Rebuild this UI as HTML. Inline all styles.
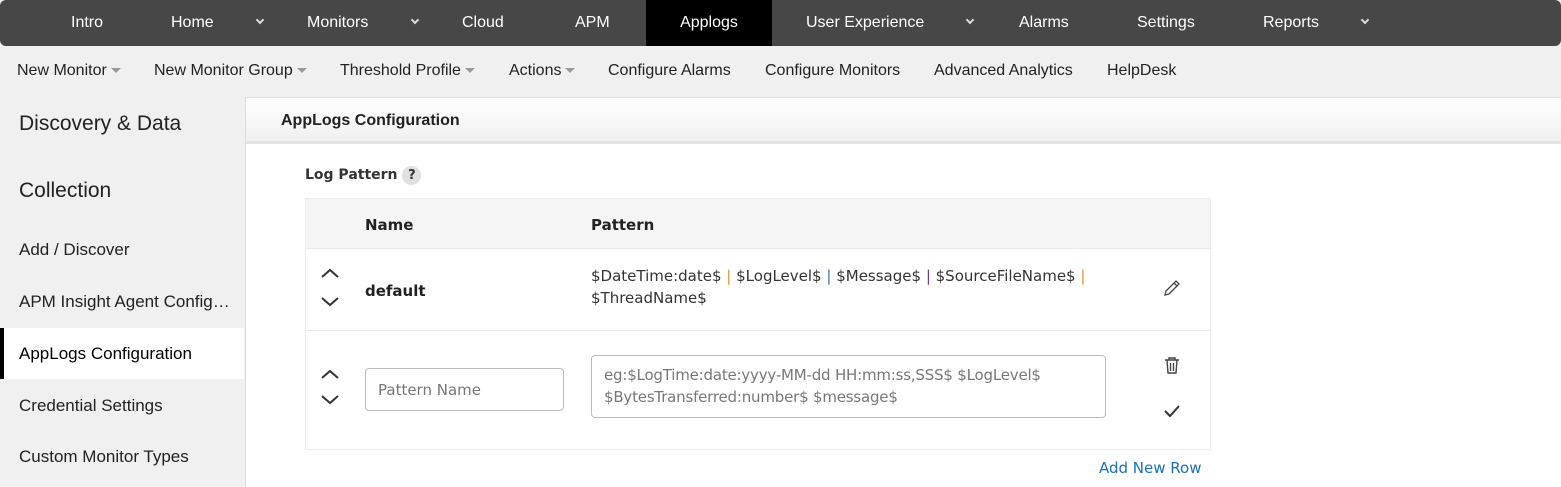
<!DOCTYPE html><html><head><style>
*{margin:0;padding:0;box-sizing:border-box}
body{width:1561px;height:487px;overflow:hidden;font-family:"Liberation Sans",Arial,sans-serif;background:#f0f0f0;position:relative;color:#222}
.top{position:absolute;left:0;top:0;width:1561px;height:46px;background:#474747;border-radius:6px}
.top span{position:absolute;top:1px;line-height:44px;color:#fff;font-size:16px}
.top .act{background:#000;height:46px;width:126px;left:646px;text-align:center;top:0;line-height:45px}
.chev{position:absolute;top:17px;border-right:2px solid #ddd;border-bottom:2px solid #ddd;transform:rotate(45deg);width:6px;height:6px}
.sub{position:absolute;top:47px;left:0;width:1561px;height:50px}
.sub span{position:absolute;top:0;line-height:48px;font-size:16px;color:#222}
.tri{display:inline-block;width:0;height:0;border-left:5px solid transparent;border-right:5px solid transparent;border-top:5px solid #999;vertical-align:middle;margin-left:4px}
.side span{position:absolute;left:19px;font-size:17px;color:#222}
.main{position:absolute;left:245px;top:97px;width:1316px;height:390px;background:#fff;border-left:1px solid #ddd}
.mh{height:47px;background:linear-gradient(#fff,#f0f0f0);border-bottom:3px solid #e4e4e4;border-top:1px solid #e0e0e0;font-weight:bold;font-size:16px;line-height:46px;padding-left:35px;color:#222}
.c{position:absolute;font-family:"DejaVu Sans",sans-serif}
</style></head><body>
<div class="top">
<span style="left:71px">Intro</span>
<span style="left:171px">Home</span><i class="chev" style="left:257px"></i>
<span style="left:307px">Monitors</span><i class="chev" style="left:412px"></i>
<span style="left:462px">Cloud</span>
<span style="left:575px">APM</span>
<span class="act">Applogs</span>
<span style="left:806px">User Experience</span><i class="chev" style="left:967px"></i>
<span style="left:1019px">Alarms</span>
<span style="left:1137px">Settings</span>
<span style="left:1263px">Reports</span><i class="chev" style="left:1362px"></i>
</div>
<div class="sub">
<span style="left:17px">New Monitor<i class="tri"></i></span>
<span style="left:154px">New Monitor Group<i class="tri"></i></span>
<span style="left:340px">Threshold Profile<i class="tri"></i></span>
<span style="left:509px">Actions<i class="tri"></i></span>
<span style="left:608px">Configure Alarms</span>
<span style="left:765px">Configure Monitors</span>
<span style="left:934px">Advanced Analytics</span>
<span style="left:1107px">HelpDesk</span>
</div>
<div class="side">
<span style="top:112px;font-size:21px">Discovery &amp; Data</span>
<span style="top:179px;font-size:21px">Collection</span>
<span style="top:240px">Add / Discover</span>
<span style="top:292px">APM Insight Agent Config…</span>
<div style="position:absolute;left:0;top:328px;width:244px;height:51px;background:#fff;border-left:4px solid #000"></div>
<span style="top:344px;color:#000">AppLogs Configuration</span>
<span style="top:396px">Credential Settings</span>
<span style="top:447px">Custom Monitor Types</span>
</div>
<div class="main"><div class="mh">AppLogs Configuration</div></div>
<div class="c" style="left:305px;top:166px;font-size:14px;font-weight:bold;color:#333">Log Pattern <span style="display:inline-block;width:19px;height:19px;border-radius:50%;background:#e0e0e0;text-align:center;line-height:19px;font-size:13px">?</span></div>
<div style="position:absolute;left:305px;top:198px;width:906px;height:252px;border:1px solid #ececec">
<div style="height:50px;background:#f5f5f5;border-bottom:1px solid #eaeaea"></div>
<div style="height:82px;border-bottom:1px solid #eaeaea"></div>
</div>
<div class="c" style="left:365px;top:216px;font-size:15px;font-weight:bold">Name</div>
<div class="c" style="left:591px;top:216px;font-size:15px;font-weight:bold">Pattern</div>
<div class="c" style="left:365px;top:282px;font-size:15px;font-weight:bold">default</div>
<div class="c" style="left:591px;top:265px;font-size:15px;line-height:22px;color:#333;letter-spacing:0px;white-space:nowrap">$DateTime:date$ <b style="color:#e8912d;font-weight:normal">|</b> $LogLevel$ <b style="color:#3a6fb0;font-weight:normal">|</b> $Message$ <b style="color:#6a3a90;font-weight:normal">|</b> $SourceFileName$ <b style="color:#e8912d;font-weight:normal">|</b><br>$ThreadName$</div>
<svg style="position:absolute;left:318px;top:265px" width="24" height="46" fill="none" stroke="#333" stroke-width="2"><path d="M4 12l8-7 8 7M4 33l8 7 8-7"/></svg>
<svg style="position:absolute;left:318px;top:365px" width="24" height="46" fill="none" stroke="#333" stroke-width="2"><path d="M4 13l8-7 8 7M4 31l8 7 8-7"/></svg>
<div class="c" style="left:365px;top:368px;width:199px;height:43px;border:1px solid #bbb;border-radius:4px;font-size:15px;color:#777;line-height:43px;padding-left:12px">Pattern Name</div>
<div class="c" style="left:591px;top:355px;width:515px;height:63px;border:1px solid #bbb;border-radius:4px;font-size:15px;color:#777;line-height:22px;padding:8px 12px;white-space:nowrap;letter-spacing:-0.2px">eg:$LogTime:date:yyyy-MM-dd HH:mm:ss,SSS$ $LogLevel$<br>$BytesTransferred:number$ $message$</div>
<svg style="position:absolute;left:1162px;top:278px" width="20" height="20" fill="none" stroke="#444" stroke-width="1.3"><path d="M3 17l1-4 10-10 3 3-10 10zM12 5l3 3"/></svg>
<svg style="position:absolute;left:1163px;top:356px" width="18" height="20" fill="none" stroke="#444" stroke-width="1.4"><path d="M2 4h14M6 4V2h6v2M4 4l1 13h8l1-13M7.5 7v8M10.5 7v8"/></svg>
<svg style="position:absolute;left:1163px;top:403px" width="18" height="16" fill="none" stroke="#333" stroke-width="2"><path d="M2 8l5 5 9-10"/></svg>
<div class="c" style="left:1099px;top:459px;font-size:15px;color:#1a6fb8">Add New Row</div>
</body></html>
